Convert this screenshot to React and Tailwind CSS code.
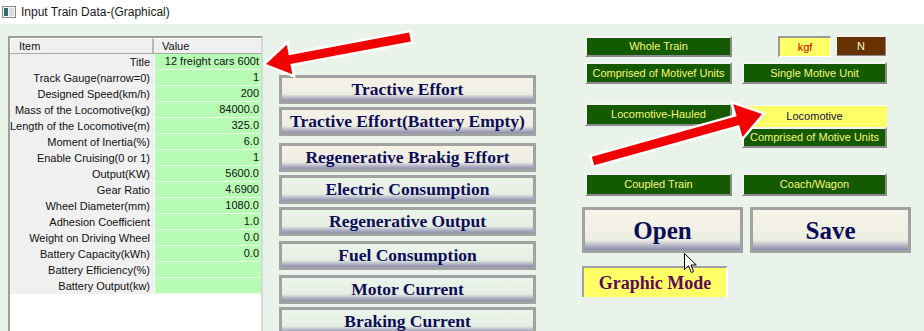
const rows = [
  ["Title", "12 freight cars 600t"],
  ["Track Gauge(narrow=0)", "1"],
  ["Designed Speed(km/h)", "200"],
  ["Mass of the Locomotive(kg)", "84000.0"],
  ["Length of the Locomotive(m)", "325.0"],
  ["Moment of Inertia(%)", "6.0"],
  ["Enable Cruising(0 or 1)", "1"],
  ["Output(KW)", "5600.0"],
  ["Gear Ratio", "4.6900"],
  ["Wheel Diameter(mm)", "1080.0"],
  ["Adhesion Coefficient", "1.0"],
  ["Weight on Driving Wheel", "0.0"],
  ["Battery Capacity(kWh)", "0.0"],
  ["Battery Efficiency(%)", ""],
  ["Battery Output(kw)", ""],
];

// label, tint, top margin
const graphButtons = [
  ["Tractive Effort", "cream", "mt-0"],
  ["Tractive Effort(Battery Empty)", "cream", "mt-[3px]"],
  ["Regenerative Brakig Effort", "cream", "mt-[7px]"],
  ["Electric Consumption", "green", "mt-[3px]"],
  ["Regenerative Output", "green", "mt-[3px]"],
  ["Fuel Consumption", "green", "mt-[5px]"],
  ["Motor Current", "green", "mt-[5px]"],
  ["Braking Current", "green", "mt-[3px]"],
];

function arrowPoints(tx, ty, ex, ey, shaft, headL, headW) {
  const dx = ex - tx, dy = ey - ty;
  const len = Math.hypot(dx, dy);
  const ux = dx / len, uy = dy / len;
  const px = -uy, py = ux;
  const bx = tx + ux * headL, by = ty + uy * headL;
  const pts = [
    [tx, ty],
    [bx + px * headW, by + py * headW],
    [bx + px * shaft, by + py * shaft],
    [ex + px * shaft, ey + py * shaft],
    [ex - px * shaft, ey - py * shaft],
    [bx - px * shaft, by - py * shaft],
    [bx - px * headW, by - py * headW],
  ];
  return pts.map(p => p.join(",")).join(" ");
}

function GreenBtn({ children, className = "" }) {
  return (
    <div className={`flex items-center justify-center bg-[#145a00] text-[#f6f67c] text-[11px] border-t-2 border-l-2 border-t-[#f4f4f4] border-l-[#f4f4f4] border-b-2 border-r-2 border-b-[#8a8a8a] border-r-[#8a8a8a] ${className}`}>
      {children}
    </div>
  );
}

function GraphBtn({ label, tint, mt }) {
  const bg = tint === "cream"
    ? "from-[#f5f3e6] via-[#eeede2] to-[#8c8cb0]"
    : "from-[#eaf4e8] via-[#e6eee2] to-[#8c8cb0]";
  return (
    <div className={`${mt} h-[29px] w-[257px] border-[3px] border-[#a2a2a2] bg-linear-to-b ${bg} via-70% flex items-center justify-center`}>
      <span className="font-['Liberation_Serif',serif] font-bold text-[17.5px] text-[#0c0c58] leading-none">{label}</span>
    </div>
  );
}

export default function App() {
  return (
    <div className="relative w-[924px] h-[331px] overflow-hidden bg-white font-['Liberation_Sans',Arial,sans-serif]">
      {/* Title bar */}
      <div className="h-6 flex items-center bg-white">
        <svg width="14" height="12" viewBox="0 0 14 12" className="ml-[2px]">
          <rect x="0.5" y="0.5" width="13" height="11" fill="#f4f4f4" stroke="#8a8a8a" />
          <rect x="2" y="2" width="4" height="8" fill="#2e6f6a" />
          <rect x="7" y="2" width="5" height="8" fill="#d9dde0" />
        </svg>
        <span className="ml-[5px] text-[12px] text-[#1a1a1a]">Input Train Data-(Graphical)</span>
      </div>

      {/* Body */}
      <div className="h-[307px] bg-[#eaf3ea] flex items-start">
        {/* Data table */}
        <div className="ml-2 mt-3 w-[255px] h-[295px] border-l-2 border-t-2 border-[#9e9e9e] border-r-2 border-r-[#d8d8d8] bg-white text-[11px] text-[#111]">
          <div className="flex h-4 bg-[#f0f0f0] border-b border-[#a8a8a8]">
            <div className="w-[144px] pl-2 border-r-2 border-r-[#b8b8b8] border-l border-l-white border-t border-t-white leading-[15px]">Item</div>
            <div className="flex-1 pl-2 border-t border-t-white leading-[15px]">Value</div>
          </div>
          {rows.map(([label, value]) => (
            <div key={label} className="flex h-4">
              <div className="w-[144px] bg-[#f0f0f0] text-right pr-1 leading-4 whitespace-nowrap">{label}</div>
              <div className="w-px bg-white" />
              <div className="flex-1 bg-[#b6fcb4] border-b border-[#e2f8e0] text-right pr-[2px] leading-[15px] whitespace-nowrap">{value}</div>
            </div>
          ))}
        </div>

        {/* Graph buttons */}
        <div className="ml-4 mt-[51px] flex flex-col">
          {graphButtons.map(([label, tint, mt]) => (
            <GraphBtn key={label} label={label} tint={tint} mt={mt} />
          ))}
        </div>

        {/* Right panel */}
        <div className="ml-[46px] flex flex-col">
          <div className="mt-3 pl-[3px] flex items-start">
            <GreenBtn className="w-[147px] h-[21px]">Whole Train</GreenBtn>
            <div className="ml-[46px] w-[53px] h-[21px] bg-[#ffff66] border-t-2 border-l-2 border-[#9a9a9a] border-b border-r border-b-white border-r-white flex items-center justify-center text-[11px] text-[#c80000]">kgf</div>
            <div className="ml-[5px] w-[50px] h-[20px] bg-[#663300] flex items-center justify-center text-[11px] text-[#fff6d0] border border-t-[#f4f4f4] border-l-[#f4f4f4] border-b-[#8a8a8a] border-r-[#8a8a8a]">N</div>
          </div>
          <div className="mt-[5px] pl-[3px] flex">
            <GreenBtn className="w-[147px] h-[22px]">Comprised of Motivef Units</GreenBtn>
            <GreenBtn className="ml-[10px] w-[145px] h-[22px]">Single Motive Unit</GreenBtn>
          </div>
          <div className="mt-[19px] pl-[3px] flex items-start">
            <GreenBtn className="w-[147px] h-[23px]">Locomotive-Hauled</GreenBtn>
            <div className="ml-[10px] mt-[2px] flex flex-col">
              <div className="w-[145px] h-[22px] bg-[#ffff66] border-t border-white flex items-center justify-center text-[11px] text-[#10104a]">Locomotive</div>
              <GreenBtn className="w-[145px] h-[21px]">Comprised of Motive Units</GreenBtn>
            </div>
          </div>
          <div className="mt-[25px] pl-[3px] flex">
            <GreenBtn className="w-[147px] h-[23px]">Coupled Train</GreenBtn>
            <GreenBtn className="ml-[10px] w-[145px] h-[23px]">Coach/Wagon</GreenBtn>
          </div>
          <div className="mt-[11px] flex">
            <div className="w-[161px] h-[46px] border-[3px] border-[#a2a2a2] bg-linear-to-b from-[#f6f4e8] via-[#eeede2] via-75% to-[#8a8aae] flex items-center justify-center">
              <span className="font-['Liberation_Serif',serif] font-bold text-[25px] text-[#0c0c58] leading-none">Open</span>
            </div>
            <div className="ml-[7px] w-[161px] h-[46px] border-[3px] border-[#a2a2a2] bg-linear-to-b from-[#f6f4e8] via-[#eeede2] via-75% to-[#8a8aae] flex items-center justify-center">
              <span className="font-['Liberation_Serif',serif] font-bold text-[25px] text-[#0c0c58] leading-none">Save</span>
            </div>
          </div>
          <div className="mt-[13px] w-[146px] h-[31px] bg-[#ffff66] border-t-2 border-l-2 border-[#a0a0a0] border-r-2 border-r-white flex items-center justify-center">
            <span className="font-['Liberation_Serif',serif] font-bold text-[18px] text-[#5e0a52] leading-none">Graphic Mode</span>
          </div>
        </div>
      </div>

      {/* Annotation arrows */}
      <svg className="absolute inset-0 pointer-events-none" width="924" height="331">
        <polygon points={arrowPoints(266, 64, 410, 37, 4.5, 24, 15)} fill="#f20000" stroke="#ffffff" strokeWidth="5" strokeLinejoin="miter" paintOrder="stroke" />
        <polygon points={arrowPoints(762, 114, 593, 161, 4.5, 25, 17)} fill="#f20000" stroke="#ffffff" strokeWidth="5" strokeLinejoin="miter" paintOrder="stroke" />
      </svg>

      {/* Mouse pointer */}
      <svg className="absolute left-[684px] top-[253px] pointer-events-none" width="14" height="22" viewBox="0 0 14 22">
        <path d="M0.5 0.5 L0.5 16.5 L4.5 12.8 L7.3 19.5 L9.6 18.5 L6.9 12 L12.3 12 Z" fill="#ffffff" stroke="#000000" strokeWidth="1" strokeLinejoin="round" />
      </svg>
    </div>
  );
}
